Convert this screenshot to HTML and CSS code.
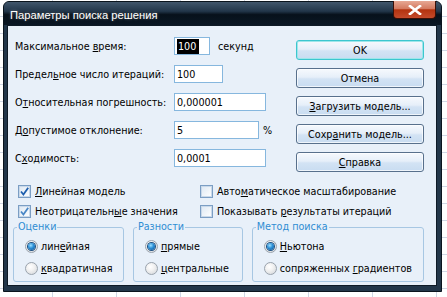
FILE: index.html
```html
<!DOCTYPE html>
<html lang="ru">
<head>
<meta charset="utf-8">
<title>Параметры поиска решения</title>
<link rel="stylesheet" href="styles.css">
</head>
<body>
<div class="window">
  <div class="titlebar">
    <span class="title">Параметры поиска решения</span>
    <button class="close" type="button" aria-label="Закрыть">
      <svg width="14" height="10" viewBox="0 0 14 10"><path d="M2 1 L12 9 M12 1 L2 9" stroke="#fff" stroke-width="2.6" stroke-linecap="square" fill="none"/></svg>
    </button>
  </div>
  <div class="client">
    <div class="top">
      <div class="fields">
        <div class="row"><span class="lbl">Максимальное <u>в</u>ремя:</span><span class="input w-time"><span class="sel">100</span></span><span class="unit">секунд</span></div>
        <div class="row"><span class="lbl">Предел<u>ь</u>ное число итераций:</span><span class="input w-iter">100</span></div>
        <div class="row"><span class="lbl">О<u>т</u>носительная погрешность:</span><span class="input w-long">0,000001</span></div>
        <div class="row"><span class="lbl">Д<u>о</u>пустимое отклонение:</span><span class="input w-dev">5</span><span class="pct">%</span></div>
        <div class="row"><span class="lbl">С<u>х</u>одимость:</span><span class="input w-long">0,0001</span></div>
      </div>
      <div class="buttons">
        <button class="btn default" type="button">OK</button>
        <button class="btn" type="button">Отмена</button>
        <button class="btn" type="button"><u>З</u>агрузить модель...</button>
        <button class="btn" type="button">Сохр<u>а</u>нить модель...</button>
        <button class="btn" type="button"><u>С</u>правка</button>
      </div>
    </div>
    <div class="checks">
      <label class="check"><span class="box on"><svg width="11" height="11" viewBox="0 0 11 11"><path d="M2 5.5 L4.4 8.5 L9.2 1.8" stroke="#1f5fae" stroke-width="1.8" fill="none"/></svg></span><span><u>Л</u>инейная модель</span></label>
      <label class="check"><span class="box"></span><span>Авто<u>м</u>атическое масштабирование</span></label>
      <label class="check"><span class="box on"><svg width="11" height="11" viewBox="0 0 11 11"><path d="M2 5.5 L4.4 8.5 L9.2 1.8" stroke="#4a87c6" stroke-width="1.8" fill="none"/></svg></span><span>Неотрицательн<u>ы</u>е значения</span></label>
      <label class="check"><span class="box"></span><span>Показывать <u>р</u>езультаты итераций</span></label>
    </div>
    <div class="groups">
      <fieldset class="group g1">
        <legend>Оценки</legend>
        <label class="radio"><span class="dot on"></span><span>лин<u>е</u>йная</span></label>
        <label class="radio"><span class="dot"></span><span><u>к</u>вадратичная</span></label>
      </fieldset>
      <fieldset class="group g2">
        <legend>Разности</legend>
        <label class="radio"><span class="dot on"></span><span><u>п</u>рямые</span></label>
        <label class="radio"><span class="dot"></span><span><u>ц</u>ентральные</span></label>
      </fieldset>
      <fieldset class="group g3">
        <legend>Метод поиска</legend>
        <label class="radio"><span class="dot on"></span><span><u>Н</u>ьютона</span></label>
        <label class="radio"><span class="dot"></span><span>сопряженных <u>г</u>радиентов</span></label>
      </fieldset>
    </div>
  </div>
</div>
</body>
</html>
```
FILE: styles.css
```css
* { box-sizing: border-box; }
html, body { margin: 0; padding: 0; }
body {
  width: 447px;
  height: 297px;
  overflow: hidden;
  font-family: "DejaVu Sans Condensed", "DejaVu Sans", sans-serif;
  font-stretch: condensed;
  font-size: 10.7px;
  color: #000;
  white-space: nowrap;
  background-color: #fff;
  background-image:
    repeating-linear-gradient(90deg, transparent 0, transparent 52px, #d0d7e5 52px, #d0d7e5 53px, transparent 53px, transparent 64px),
    repeating-linear-gradient(180deg, transparent 0, transparent 16px, #d0d7e5 16px, #d0d7e5 17px, transparent 17px, transparent 17px);
}
u { text-decoration: underline; text-underline-offset: 1px; }

.window {
  margin: 1px 0 0 3px;
  width: 439px;
  height: 291px;
  display: flex;
  flex-direction: column;
  border: 1px solid #0a141d;
  border-radius: 6px 6px 0 0;
  background: #223649;
}
.titlebar {
  height: 23px;
  display: flex;
  align-items: flex-start;
  padding-left: 6px;
  background: linear-gradient(#41566b 0, #22364a 40%, #07111b 55%, #0a1724 100%);
  border-radius: 5px 5px 0 0;
}
.title {
  color: #fff;
  font-family: "Liberation Sans", Arial, sans-serif;
  font-stretch: normal;
  font-size: 11.2px;
  line-height: 15px;
  margin-top: 6px;
  text-shadow: 0 0 3px rgba(255,255,255,0.35);
}
.close {
  margin-left: auto;
  margin-right: 5px;
  margin-top: -1px;
  width: 43px;
  height: 18px;
  padding: 0;
  border: 1px solid #3b1007;
  border-top: 0;
  border-radius: 0 0 4px 4px;
  background: linear-gradient(#e7a894 0, #d47a60 45%, #b3330f 52%, #c44a2b 100%);
  display: flex;
  align-items: center;
  justify-content: center;
}
.close svg { display: block; }

.client {
  flex: 1;
  margin: 0 4px 5px 3px;
  border: 1px solid #0e1a26;
  background: #e8f0f9;
  padding: 6px 12px 0 7px;
  display: flex;
  flex-direction: column;
}

.top { display: flex; }
.fields { flex: 1; }
.row {
  height: 28px;
  display: flex;
  align-items: center;
}
.lbl { width: 159px; flex: none; }
.input {
  height: 18px;
  border: 1px solid #86b7de;
  background: #fff;
  padding: 0 2px;
  display: flex;
  align-items: center;
  flex: none;
}
.w-time { width: 36px; }
.w-iter { width: 49px; }
.w-long { width: 92px; }
.w-dev { width: 85px; }
.sel { background: #000; color: #fff; padding: 0 3px 0 1px; line-height: 15px; }
.unit { margin-left: 8px; }
.pct { margin-left: 4px; }

.buttons {
  width: 128px;
  padding-top: 8px;
  display: flex;
  flex-direction: column;
  gap: 8px;
}
.btn {
  height: 20px;
  width: 128px;
  padding: 0;
  font: inherit;
  color: #000;
  border: 1px solid #58708c;
  border-radius: 3px;
  background: linear-gradient(#f6f9fd 0, #e6eff9 45%, #d3e3f4 55%, #c8dcf1 100%);
  box-shadow: inset 0 0 0 1px rgba(255,255,255,0.7);
}
.btn.default {
  border-color: #3cc6cf;
  box-shadow: inset 0 0 0 1px #9ee6ea;
}

.checks {
  margin-top: 9px;
  padding-left: 3px;
  display: grid;
  grid-template-columns: 182px 1fr;
  grid-auto-rows: 20px;
}
.check { display: flex; align-items: center; gap: 4px; }
.box {
  width: 13px;
  height: 13px;
  border: 1px solid #7b9ec4;
  background: linear-gradient(135deg, #dde8f3, #ffffff);
  box-shadow: inset 0 0 0 1px #c9d9ea;
  display: flex;
  align-items: center;
  justify-content: center;
  flex: none;
}
.box svg { display: block; }

.groups {
  margin-top: -1px;
  margin-left: -2px;
  display: flex;
  gap: 9px;
}
.group {
  margin: 0;
  height: 62px;
  padding: 0 0 1px 11px;
  border: 1px solid #a7c7e3;
  border-radius: 3px;
}
.group legend {
  color: #2f8dd3;
  padding: 0 1px;
  margin-left: -8px;
  line-height: 14px;
}
.g1 { width: 112px; }
.g2 { width: 111px; }
.g3 { width: 174px; }
.radio {
  height: 22px;
  display: flex;
  align-items: center;
  gap: 3px;
}
.radio:first-of-type { margin-top: 1px; }
.dot {
  width: 13px;
  height: 13px;
  border-radius: 50%;
  border: 1px solid #9aa3ad;
  background: radial-gradient(circle at 40% 35%, #ffffff 0, #f1f1f1 40%, #cfd3d7 100%);
  display: flex;
  align-items: center;
  justify-content: center;
  flex: none;
}
.dot.on::after {
  content: "";
  width: 7px;
  height: 7px;
  border-radius: 50%;
  background: radial-gradient(circle at 40% 35%, #9fe0ff 0, #2b8fd6 45%, #0b4d8e 100%);
  box-shadow: 0 0 0 1px #1c4f80;
}
```
